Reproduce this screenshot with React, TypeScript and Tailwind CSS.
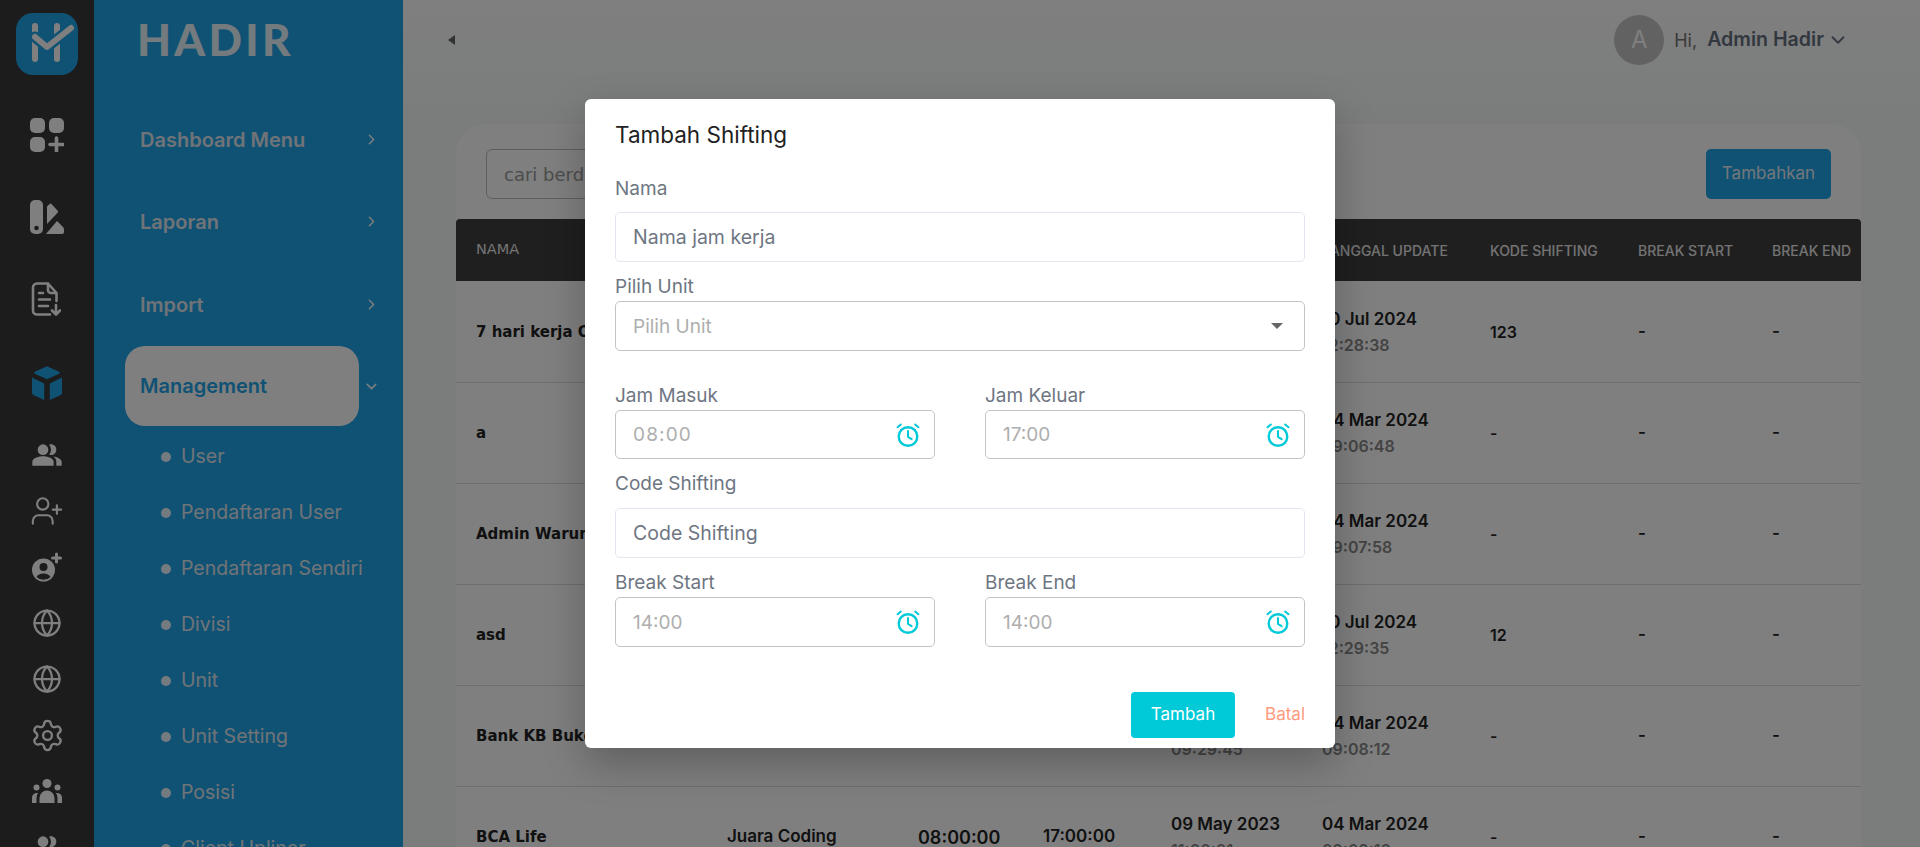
import { ChevronDown, ChevronRight, Globe, Settings, UserPlus } from 'lucide-react';
import { MdPeopleAlt } from 'react-icons/md';

const BODY_FONT = "font-['Inter',sans-serif]";
const WIDE_FONT = "font-['DejaVu_Sans',sans-serif]";

const MENU_ITEMS = ['Dashboard Menu', 'Laporan', 'Import'];
const SUB_ITEMS = ['User', 'Pendaftaran User', 'Pendaftaran Sendiri', 'Divisi', 'Unit', 'Unit Setting', 'Posisi', 'Client Upliner'];

const TABLE_COLUMNS = 'grid-cols-[250px_191px_125px_128px_151px_168px_148px_134px_110px]';
const HEADERS = ['NAMA', 'UNIT', 'JAM MASUK', 'JAM KELUAR', 'TANGGAL DIBUAT', 'TANGGAL UPDATE', 'KODE SHIFTING', 'BREAK START', 'BREAK END'];

const ROWS = [
  { name: '7 hari kerja Office', unit: 'Juara Coding', created: ['10 Jul 2024', '12:28:38'], updated: ['10 Jul 2024', '12:28:38'], code: '123' },
  { name: 'a', unit: 'Juara Coding', created: ['09 May 2023', '11:00:01'], updated: ['04 Mar 2024', '09:06:48'], code: '-' },
  { name: 'Admin Warung', unit: 'Juara Coding', created: ['09 May 2023', '11:00:01'], updated: ['04 Mar 2024', '09:07:58'], code: '-' },
  { name: 'asd', unit: 'Juara Coding', created: ['10 Jul 2024', '12:29:35'], updated: ['10 Jul 2024', '12:29:35'], code: '12' },
  { name: 'Bank KB Bukopin', unit: 'Juara Coding', created: ['09 May 2023', '09:29:45'], updated: ['04 Mar 2024', '09:08:12'], code: '-' },
  { name: 'BCA Life', unit: 'Juara Coding', created: ['09 May 2023', '11:00:01'], updated: ['04 Mar 2024', '09:09:10'], code: '-' },
];

function LogoMark() {
  return (
    <svg viewBox="0 0 62 62" className="h-[62px] w-[62px] shrink-0">
      <rect width="62" height="62" rx="17" fill="#1ea4e8" />
      <path d="M19 13v33M41 13v33" stroke="#fff" strokeWidth="6" strokeLinecap="round" />
      <path d="M19 24l12 10 24-19" fill="none" stroke="#1ea4e8" strokeWidth="11" strokeLinecap="round" strokeLinejoin="round" />
      <path d="M19 24l12 10 24-19" fill="none" stroke="#fff" strokeWidth="6" strokeLinecap="round" strokeLinejoin="round" />
    </svg>
  );
}

function GridPlusIcon() {
  return (
    <svg viewBox="0 0 34 34" className="h-[34px] w-[34px]" fill="#fff">
      <rect width="15" height="15" rx="5" />
      <rect x="19" width="15" height="15" rx="5" />
      <rect y="19" width="15" height="15" rx="5" />
      <path d="M26.500 20v13M20 26.500h13" stroke="#fff" strokeWidth="3.600" strokeLinecap="round" />
    </svg>
  );
}

function SwatchIcon() {
  return (
    <svg viewBox="0 0 34 34" className="h-[34px] w-[34px]" fill="#fff">
      <path d="M5 0h3a5 5 0 0 1 5 5v24a5 5 0 0 1-5 5H5a5 5 0 0 1-5-5V5a5 5 0 0 1 5-5z" />
      <circle cx="6.500" cy="28" r="2.300" fill="#383838" />
      <path d="M17 6.500l2.500-2.500q1-.8 2 0l6 6.500q1 1 .3 2L17 24z" />
      <path d="M16 34l11-13 6 6q1 1 1 3v2q0 2-2 2z" />
    </svg>
  );
}

function FileDownIcon() {
  return (
    <svg viewBox="0 0 30 34" className="mr-[3px] h-[34px] w-[30px]" fill="none" stroke="#fff" strokeWidth="2.600" strokeLinecap="round" strokeLinejoin="round">
      <path d="M17 1.500H6a4 4 0 0 0-4 4v23a4 4 0 0 0 4 4h13M17 1.500l8.500 9.500v8M17 1.500V8a3 3 0 0 0 3 3h5.500" />
      <path d="M8 11h4M8 17.500h11M8 24h9M25 23v9M21 28.500l4 4 4-4" />
    </svg>
  );
}

function CubeIcon() {
  return (
    <svg viewBox="0 0 32 36" className="h-[34px] w-[30px]" fill="#1ea4e8">
      <path d="M16 0l13 6q1.500 1 0 2l-13 6-13-6q-1.500-1 0-2z" />
      <path d="M0 12l13 6.500V36L2 31q-2-1-2-3z" />
      <path d="M32 12l-13 6.500V36l11-5q2-1 2-3z" />
    </svg>
  );
}

function AccountPlusIcon() {
  return (
    <svg viewBox="0 0 30 30" className="h-[30px] w-[30px]" fill="#fff">
      <circle cx="11.500" cy="18" r="11.500" />
      <circle cx="11.500" cy="15" r="4" fill="#383838" />
      <path d="M4.500 25a7.500 5.500 0 0 1 14 0 10 10 0 0 1-14 0z" fill="#383838" />
      <path d="M24.500 2v8M20.500 6h8" stroke="#fff" strokeWidth="3" strokeLinecap="round" />
    </svg>
  );
}

function GroupIcon() {
  return (
    <svg viewBox="0 0 30 24" className="h-[24px] w-[30px]" fill="#fff">
      <circle cx="15" cy="4.500" r="4.500" />
      <circle cx="4.500" cy="8.500" r="3" />
      <circle cx="25.500" cy="8.500" r="3" />
      <path d="M7.500 24v-5a7.500 7.500 0 0 1 15 0v5z" />
      <path d="M0 24v-5q0-4 4-5h2q-1.500 2-1.500 5v5z" />
      <path d="M30 24v-5q0-4-4-5h-2q1.500 2 1.500 5v5z" />
    </svg>
  );
}

function AlarmIcon() {
  return (
    <svg viewBox="0 0 24 24" className="h-[24px] w-[24px] shrink-0" fill="none" stroke="#00c9d8" strokeWidth="2.400" strokeLinecap="round" strokeLinejoin="round">
      <circle cx="12" cy="13.500" r="9.300" />
      <path d="M12 8v5.800l3.600 2.400M1.500 4.200l3.300-2.700M22.500 4.200l-3.300-2.700" strokeWidth="2" />
    </svg>
  );
}

function RailSlot({ className, children }: { className: string; children: React.ReactNode }) {
  return <div className={`flex w-full shrink-0 items-center justify-center ${className}`}>{children}</div>;
}

function IconRail() {
  return (
    <aside className="flex h-full w-[94px] shrink-0 flex-col items-center bg-[#383838] pt-[13px] text-white">
      <LogoMark />
      <RailSlot className="mt-[19px] h-[82px]"><GridPlusIcon /></RailSlot>
      <RailSlot className="h-[82px]"><SwatchIcon /></RailSlot>
      <RailSlot className="h-[82px]"><FileDownIcon /></RailSlot>
      <RailSlot className="mt-[2px] h-[82px]"><CubeIcon /></RailSlot>
      <RailSlot className="mt-[3px] h-[56px]"><MdPeopleAlt size={32} /></RailSlot>
      <RailSlot className="h-[56px]"><UserPlus size={34} strokeWidth={1.5} /></RailSlot>
      <RailSlot className="h-[56px]"><AccountPlusIcon /></RailSlot>
      <RailSlot className="h-[56px]"><Globe size={30} strokeWidth={1.8} /></RailSlot>
      <RailSlot className="h-[56px]"><Globe size={30} strokeWidth={1.8} /></RailSlot>
      <RailSlot className="h-[56px]"><Settings size={35} strokeWidth={1.6} /></RailSlot>
      <RailSlot className="h-[56px]"><GroupIcon /></RailSlot>
      <RailSlot className="h-[56px]"><MdPeopleAlt size={32} /></RailSlot>
    </aside>
  );
}

function Sidebar() {
  return (
    <nav className={`h-full w-[309px] shrink-0 bg-[#1ea4e8] text-white ${BODY_FONT}`}>
      <div className="flex h-[98px] items-start pl-[43px] pt-[12px] font-['Lato',sans-serif] text-[44px] font-black leading-[54px] tracking-[0.075em] text-white/90">
        HADIR
      </div>
      {MENU_ITEMS.map((item, i) => (
        <div key={item} className={`flex items-center justify-between pl-[46px] pr-[23px] ${i === 2 ? 'mt-px h-[83px]' : 'h-[82px]'}`}>
          <span className="pt-px text-[20px] font-semibold text-[#e0e8f0]">{item}</span>
          <ChevronRight size={17} />
        </div>
      ))}
      <div className="flex items-center justify-between pr-[23px]">
        <div className="ml-[31px] flex h-[80px] w-[234px] items-center rounded-[20px] bg-white pl-[15px] text-[20px] font-semibold text-[#1ea4e8]">
          Management
        </div>
        <ChevronDown size={17} />
      </div>
      <ul className="mt-[3px]">
        {SUB_ITEMS.map((item) => (
          <li key={item} className="flex h-[56px] items-center pl-[67px] text-[19.500px] text-[#e0e8f0]">
            <span className="mr-[10px] h-[10px] w-[10px] rounded-full bg-white/90" />
            {item}
          </li>
        ))}
      </ul>
    </nav>
  );
}

function DateCell({ value }: { value: string[] }) {
  return (
    <div className="flex flex-col gap-[5px]">
      <span className="text-[17px] leading-[21px] font-semibold text-[#222]">{value[0]}</span>
      <span className="text-[16px] leading-[21px] font-semibold text-[#888]">{value[1]}</span>
    </div>
  );
}

function ShiftTable() {
  return (
    <div className="mt-[20px]">
      <div className={`grid h-[62px] items-center rounded-t-[4px] bg-[#3e3e3e] text-[14px] font-medium text-[#e6e6e6] ${TABLE_COLUMNS}`}>
        {HEADERS.map((header, i) => (
          <div key={header} className={i === 0 ? `pl-[20px] ${WIDE_FONT} text-[14.500px]` : 'pl-[21px]'}>{header}</div>
        ))}
      </div>
      <div className="pt-px">
        {ROWS.map((row) => (
          <div key={row.name} className={`grid h-[101px] items-center border-b border-[#dddddd] text-[17px] font-semibold text-[#222] ${TABLE_COLUMNS}`}>
            <div className={`pl-[20px] text-[15px] font-bold ${WIDE_FONT}`}>{row.name}</div>
            <div className="pl-[21px]">{row.unit}</div>
            <div className="pl-[21px] text-[18px]">08:00:00</div>
            <div className="pl-[21px]">17:00:00</div>
            <div className="pl-[21px]"><DateCell value={row.created} /></div>
            <div className="pl-[21px]"><DateCell value={row.updated} /></div>
            <div className="pl-[21px] text-[16px]">{row.code}</div>
            <div className="pl-[21px]">-</div>
            <div className="pl-[21px]">-</div>
          </div>
        ))}
      </div>
    </div>
  );
}

function MainContent() {
  return (
    <main className={`h-full min-w-0 flex-1 bg-linear-to-b from-[#fefefe] to-[#f6fafa] to-[15%] ${BODY_FONT}`}>
      <header className="flex h-[80px] items-center justify-between pl-[45px] pr-[71px]">
        <span className="h-0 w-0 border-y-[5px] border-r-[7px] border-y-transparent border-r-[#666]" />
        <div className="flex items-center">
          <span className="flex h-[50px] w-[50px] items-center justify-center rounded-full bg-[#c4c4c4] text-[24px] text-white">A</span>
          <span className="ml-[10px] text-[18px] text-[#777]">Hi,</span>
          <span className="ml-[10px] text-[19.600px] font-semibold text-[#667080]">Admin Hadir</span>
          <ChevronDown size={22} className="ml-[3px] text-[#667080]" />
        </div>
      </header>
      <section className="ml-[53px] mr-[59px] mt-[44px] h-[800px] rounded-t-[30px] bg-white">
        <div className="flex items-center justify-between pl-[30px] pr-[30px] pt-[25px]">
          <div className={`flex h-[50px] w-[400px] items-center rounded-[6px] border border-[#bdbdbd] pl-[17px] text-[18px] text-[#999] ${WIDE_FONT}`}>
            cari berdasarkan nama
          </div>
          <button className="h-[50px] w-[125px] rounded-[5px] bg-[#1ea4e8] text-[17px] text-[#e6eef4]">Tambahkan</button>
        </div>
        <ShiftTable />
      </section>
    </main>
  );
}

function FieldLabel({ children, className }: { children: React.ReactNode; className: string }) {
  return <label className={`block h-[24px] text-[19px] leading-[26px] text-[#6e7682] ${className}`}>{children}</label>;
}

function TimeField({ label, placeholder, heightClass, valueClass }: { label: string; placeholder: string; heightClass: string; valueClass: string }) {
  return (
    <div>
      <FieldLabel className="">{label}</FieldLabel>
      <div className={`mt-[3px] flex items-center justify-between rounded-[5px] border border-[#c4c4c4] pl-[17px] pr-[14px] text-[19px] text-[#aeaeae] ${heightClass}`}>
        <span className={`pt-[2px] ${valueClass}`}>{placeholder}</span>
        <AlarmIcon />
      </div>
    </div>
  );
}

function TextField({ placeholder, className }: { placeholder: string; className: string }) {
  return (
    <div className={`flex h-[50px] items-center rounded-[5px] border border-[#e2e6ef] pl-[17px] pt-[2px] text-[19.500px] text-[#6e7682] ${className}`}>
      {placeholder}
    </div>
  );
}

function ShiftingModal() {
  return (
    <div className="absolute inset-0 bg-black/50">
      <div className={`absolute left-[585px] top-[99px] w-[750px] rounded-[6px] bg-white px-[30px] pb-[10px] pt-[22px] shadow-[0_16px_40px_rgba(0,0,0,0.25)] ${BODY_FONT}`}>
        <h2 className="text-[22.500px] font-normal leading-[28px] text-[#222]">Tambah Shifting</h2>
        <FieldLabel className="mt-[27px]">Nama</FieldLabel>
        <TextField placeholder="Nama jam kerja" className="mt-[12px]" />
        <FieldLabel className="mt-[12px]">Pilih Unit</FieldLabel>
        <div className="mt-[3px] flex h-[50px] items-center justify-between rounded-[5px] border border-[#c4c4c4] pl-[17px] pr-[21px] text-[19px] text-[#aeaeae]">
          <span className="pt-[2px]">Pilih Unit</span>
          <span className="h-0 w-0 border-x-[6px] border-t-[6px] border-x-transparent border-t-[#666]" />
        </div>
        <div className="mt-[32px] grid grid-cols-2 gap-x-[50px]">
          <TimeField label="Jam Masuk" placeholder="08:00" heightClass="h-[49px]" valueClass="tracking-[0.06em]" />
          <TimeField label="Jam Keluar" placeholder="17:00" heightClass="h-[49px]" valueClass="" />
        </div>
        <FieldLabel className="mt-[12px]">Code Shifting</FieldLabel>
        <TextField placeholder="Code Shifting" className="mt-[13px]" />
        <div className="mt-[12px] grid grid-cols-2 gap-x-[50px]">
          <TimeField label="Break Start" placeholder="14:00" heightClass="h-[50px]" valueClass="" />
          <TimeField label="Break End" placeholder="14:00" heightClass="h-[50px]" valueClass="" />
        </div>
        <div className="mt-[45px] flex items-center justify-end">
          <button className="h-[46px] w-[104px] rounded-[4px] bg-[#00c9d8] text-[17px] text-white">Tambah</button>
          <button className="ml-[30px] text-[17px] text-[#ff9a80]">Batal</button>
        </div>
      </div>
    </div>
  );
}

export default function App() {
  return (
    <div className="relative flex h-[847px] w-[1920px] overflow-hidden">
      <IconRail />
      <Sidebar />
      <MainContent />
      <ShiftingModal />
    </div>
  );
}
